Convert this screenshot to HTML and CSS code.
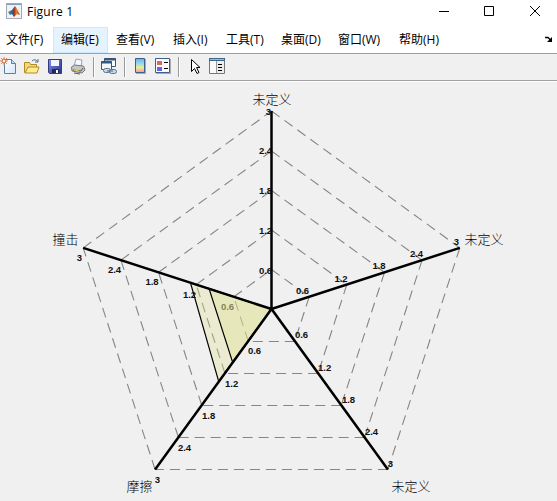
FILE: index.html
```html
<!DOCTYPE html>
<html lang="zh-CN">
<head>
<meta charset="utf-8">
<title>Figure 1</title>
<link rel="stylesheet" href="styles.css">
</head>
<body>
<header class="titlebar">
  <svg class="logo" width="16" height="16" viewBox="0 0 16 16">
    <defs><linearGradient id="flame"><stop offset="0" stop-color="#4d91bd"/><stop offset=".38" stop-color="#315d83"/><stop offset=".5" stop-color="#9e2c20"/><stop offset=".7" stop-color="#e57b2d"/><stop offset="1" stop-color="#b53b1b"/></linearGradient></defs>
    <rect x=".5" y=".5" width="15" height="15" fill="#edf2f6" stroke="#a4abb4"/>
    <path d="M1 1.5h14" stroke="#7f9fc2"/>
    <path d="M2 9l4-2 3-4 2 3 3 6-3-1-3 3-2-3-2 1z" fill="url(#flame)"/>
  </svg>
  <span class="title">Figure 1</span>
  <svg class="controls" width="105" height="24" viewBox="0 0 105 24" fill="none" stroke="#000">
    <path d="M0 11.5h10M45.500 6.500h9v9h-9z"/><path d="M91 6l10 10M101 6L91 16"/>
  </svg>
</header>
<nav class="menu">
  <span>文件(F)</span><span class="active">编辑(E)</span><span>查看(V)</span><span>插入(I)</span><span>工具(T)</span><span>桌面(D)</span><span>窗口(W)</span><span>帮助(H)</span>
  <svg class="dock" width="8" height="7" viewBox="0 0 8 7"><path d="M0 1.500h3l3 3" fill="none" stroke="#000" stroke-width="1.300"/><path d="M7 1v5H2z"/></svg>
</nav>
<div class="toolbar">
  <svg width="240" height="26" viewBox="0 54 240 26">
    <defs>
      <linearGradient id="rainbow" x2="0" y2="1"><stop stop-color="#8c9aef"/><stop offset=".3" stop-color="#83d9e5"/><stop offset=".65" stop-color="#eee99b"/><stop offset="1" stop-color="#ee9a91"/></linearGradient>
      <linearGradient id="paper" x2="1" y2="1"><stop stop-color="#fff"/><stop offset="1" stop-color="#d5e7f8"/></linearGradient>
      <linearGradient id="disk" x2="1" y2="1"><stop stop-color="#8795e0"/><stop offset="1" stop-color="#252d8c"/></linearGradient>
    </defs>
    <path d="M4.500 59.500h7l4 4v10h-11z" fill="url(#paper)" stroke="#5a7fa9"/>
    <path d="M11.500 59.500v4h4" fill="#c2d8ed" stroke="#5a7fa9"/>
    <path d="M1 58l6 6M7 58l-6 6M4 57v8M0 61h8" stroke="#e98b55"/><circle cx="4" cy="61" r="2" fill="#fff0c0" stroke="#d75f36"/>
    <path d="M24.500 72.500v-10h5l1 2h6v8z" fill="#f4d978" stroke="#b28a21"/>
    <path d="M25 73l3-6h11l-2 6z" fill="#ffed96" stroke="#b28a21"/>
    <path d="M32 61q3-3 6 1m0-3v3h-3" fill="none" stroke="#526f91"/>
    <path d="M48.500 59.500h13v14h-12l-1-1z" fill="url(#disk)" stroke="#333b86"/>
    <path d="M51 60h8v6h-8z" fill="#f0f4ff"/><path d="M52 69h7v4h-7z" fill="#222a54"/><path d="M56 70h2v3h-2z" fill="#fff"/>
    <path d="M74 66l2-7 6 1-1 7z" fill="#f5f9ff" stroke="#8fa5bf"/>
    <path d="M71.500 67l3-2 9 1 1.500 4-3 3-10-2z" fill="#c4c5c5" stroke="#777"/>
    <path d="M73 70l8 1 2-3M74 73l6 1" stroke="#555" fill="none"/><path d="M74 70l5 1" stroke="#e4d45e"/>
    <path d="M93.500 57v20M124.500 57v20M178.500 57v20" stroke="#989898"/><path d="M94.500 57v20M125.500 57v20M179.500 57v20" stroke="#fff"/>
    <path d="M104.500 58.500h11v8h-11z" fill="#fff" stroke="#35577f"/><path d="M104 59.500h12" stroke="#35577f" stroke-width="2"/>
    <path d="M101.500 61.500h10v8h-10z" fill="#f3f7fc" stroke="#35577f"/><path d="M101 62.500h11" stroke="#35577f" stroke-width="2"/>
    <rect x="103.500" y="68.500" width="7" height="4" rx="2" fill="#cbd9e6" stroke="#5c7690"/><rect x="109.500" y="69.500" width="7" height="4" rx="2" fill="#cbd9e6" stroke="#5c7690"/><path d="M107 71h6" stroke="#49637e"/>
    <path d="M136 59h10v15h-10z" fill="#aaa"/><path d="M135.500 58.500h9v14h-9z" fill="url(#rainbow)" stroke="#3e5f8c"/>
    <path d="M156 59h15v15h-15z" fill="#aaa"/><path d="M155.500 58.500h14v14h-14z" fill="#f9fbff" stroke="#3e5f8c"/>
    <path d="M157 61h5v4h-5z" fill="#e36363"/><path d="M157 67h5v4h-5z" fill="#6567dc"/><path d="M164 62.500h4M164 68.500h4" stroke="#000"/>
    <path d="M191.500 59.500v12l3-3 2.500 5 2-1-2.500-5h3.500z" fill="#fff" stroke="#000"/>
    <path d="M209.500 58.500h15v15h-15z" fill="#ececec" stroke="#777"/><path d="M209 59.500h16" stroke="#3f6685" stroke-width="3"/><path d="M210 59.500h14" stroke="#91bfda"/>
    <path d="M210 61h6v12h-6z" fill="#fafafa"/><path d="M216.500 61v12" stroke="#999"/><path d="M218 64.500h4M218 67.500h4M218 70.500h4" stroke="#000"/>
  </svg>
</div>
<main>
<svg class="chart" width="557" height="419" viewBox="0 82 557 419">
  <g class="rings">
    <path d="M271.500 269.500L309.200 296.800M271.500 230L346.800 284.600M271.500 190.500L384.500 272.300M271.500 151L422.100 260.100M271.500 111L459.800 247.900"/>
    <path d="M309.200 296.800L294.800 341.100M346.800 284.600L318.100 373.200M384.500 272.300L341.300 405.200M422.100 260.100L364.600 437.300M459.800 247.900L387.900 469.500"/>
    <path d="M294.800 341.500H248.200M318.100 373.500H224.900M341.300 405.500H201.700M364.600 437.500H178.400M387.900 469.500H155.100"/>
    <path d="M248.200 341.100L233.800 296.800M224.900 373.200L196.200 284.600M201.700 405.200L158.500 272.300M178.400 437.300L120.900 260.100M155.100 469.500L83.200 247.900"/>
    <path d="M233.800 296.800L271.500 269.500M196.200 284.600L271.500 230M158.500 272.300L271.500 190.500M120.900 260.100L271.500 151M83.200 247.900L271.500 111"/>
  </g>
  <g class="tick">
    <text x="227.500" y="310">0.6</text>
  </g>
  <path class="area" d="M271.500 309L190.500 283 218.700 381.500z"/>
  <path class="area" d="M271.500 309L209 288.500 232.700 362.500z"/>
  <path class="axes" d="M271.500 111V309L459.800 247.900M387.900 469.500L271.500 309 155.100 469.500M83.200 247.900L271.500 309"/>
  <g class="tick">
    <text x="268.500" y="115">3</text><text x="265.500" y="154">2.4</text><text x="265.500" y="194">1.8</text><text x="265.500" y="234">1.2</text><text x="265.500" y="274">0.6</text>
    <text x="302.500" y="294">0.6</text><text x="341" y="282">1.2</text><text x="379" y="269">1.8</text><text x="416.500" y="257">2.4</text><text x="456.500" y="245">3</text>
    <text x="301.500" y="338">0.6</text><text x="324.700" y="371">1.2</text><text x="348.500" y="403">1.8</text><text x="371.500" y="435">2.4</text><text x="390.500" y="467">3</text>
    <text x="254.500" y="354">0.6</text><text x="231.700" y="387">1.2</text><text x="208.700" y="419">1.8</text><text x="184.500" y="451">2.4</text><text x="157.500" y="483">3</text>
    <text x="189.500" y="298">1.2</text><text x="152" y="285">1.8</text><text x="114.500" y="273">2.4</text><text x="79.500" y="261">3</text>
  </g>
  <g class="label">
    <text x="252.500" y="103.500">未定义</text><text x="464.500" y="243.500">未定义</text><text x="391.500" y="490.500">未定义</text><text x="126.500" y="490.500">摩擦</text><text x="52.500" y="243.500">撞击</text>
  </g>
</svg>
</main>
</body>
</html>
```
FILE: styles.css
```css
* { box-sizing: border-box; }
body { margin: 0; width: 557px; height: 501px; overflow: hidden; background: #f0f0f0; color: #000; font: 12px/16px "Open Sans", "Noto Sans CJK SC", sans-serif; }
svg { display: block; flex: none; }
.titlebar { display: flex; height: 27px; background: #fff; }
.logo { margin: 3px 5px 0 6px; }
.title { padding-top: 4px; letter-spacing: .2px; }
.controls { margin-left: auto; margin-right: 13px; }
.menu { display: grid; grid-template-columns: 53px 55px 57px 53px 55px 57px 61px 57px 1fr; height: 26px; background: #fff; line-height: 25px; white-space: nowrap; }
.menu span { padding-left: 8px; }
.menu span:first-child { padding-left: 6px; }
.menu .active { background: #e5f3ff; border: 1px solid #cce8ff; padding-left: 7px; line-height: 23px; }
.dock { justify-self: end; margin: 9px 4px 0 0; }
.toolbar { height: 29px; border-top: 1px solid #a0a0a0; border-bottom: 1px solid #fff; background: linear-gradient(#f0f0f0 26px, #a0a0a0 26px); }
.rings { fill: none; stroke: #858585; stroke-width: 1.100; stroke-dasharray: 10 6; }
.area { fill: #dfdf90; fill-opacity: .32; stroke: #000; stroke-width: 1.200; }
.axes { fill: none; stroke: #000; stroke-width: 2.500; }
.tick { font: bold 9.500px "Liberation Sans", sans-serif; text-anchor: middle; fill: #111; }
.label { font: 300 13px "Noto Sans CJK SC", sans-serif; }
```
